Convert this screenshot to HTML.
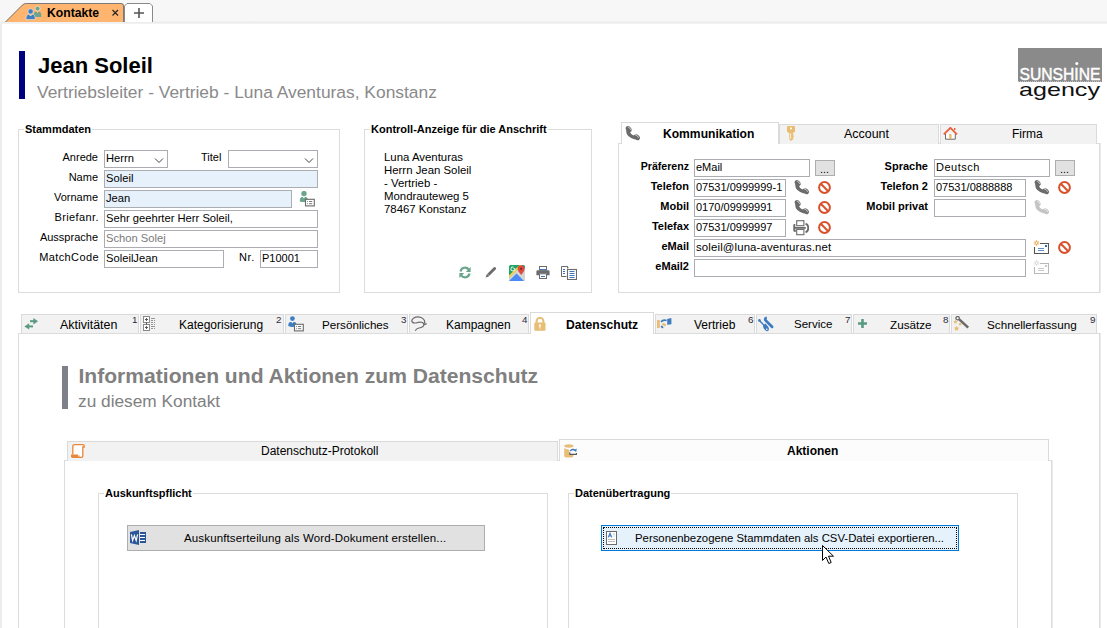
<!DOCTYPE html>
<html><head><meta charset="utf-8">
<style>
*{box-sizing:border-box;margin:0;padding:0}
html,body{width:1107px;height:628px;overflow:hidden;background:#fff;font-family:"Liberation Sans",sans-serif;color:#000}
.a{position:absolute}
.t{position:absolute;white-space:pre;line-height:1}
.b{font-weight:bold}
.fld{position:absolute;border:1px solid #abadb3;background:#fff;height:18px}
.blue{background:#e6f1fc}
.grp{position:absolute;border:1px solid #dcdcdc}
.gt{position:absolute;white-space:pre;line-height:1;font-weight:bold;font-size:11px;background:#fff;padding:0 1px}
.lbl{position:absolute;white-space:pre;line-height:1;font-size:11px;text-align:right}
.ftx{position:absolute;white-space:pre;line-height:1;font-size:11px}
.tab{position:absolute;background:#f2f2f2;border:1px solid #dadada;border-bottom:none}
.sup{position:absolute;font-size:9.8px;line-height:1;color:#2a2a3a}
</style></head>
<body>
<svg width="0" height="0" style="position:absolute">
<defs>
 <g id="phone">
  <path d="M3 4.6 Q3.2 10.8 11 12.6" fill="none" stroke="currentColor" stroke-width="3.8"/>
  <ellipse cx="3.9" cy="3.4" rx="3.6" ry="2.7" transform="rotate(50 3.9 3.4)" fill="currentColor"/>
  <ellipse cx="12.6" cy="12" rx="3.6" ry="2.7" transform="rotate(40 12.6 12)" fill="currentColor"/>
  <path d="M3 0.9 Q5.8 2.2 6.4 4.4 M10.8 9.4 Q13.4 10 14.6 12.6" fill="none" stroke="#fff" stroke-width="0.75" opacity="0.9"/>
 </g>
 <g id="forbid">
  <circle cx="6.5" cy="6.5" r="5.4" fill="none" stroke="#d9512c" stroke-width="2"/>
  <path d="M2.8 2.8 L10.2 10.2" stroke="#d9512c" stroke-width="2"/>
 </g>
 <g id="printer">
  <rect x="3.7" y="0.7" width="7.2" height="5" fill="#fff" stroke="#6b6b6b" stroke-width="1.1"/>
  <path d="M1.4 4 H2.3 V7 H12.8 V8.8 H2.3 V10.2 H3.4 V11.8 H1.4 Q0.3 11.8 0.3 10.6 V5.2 Q0.3 4 1.4 4 Z" fill="#6b6b6b"/>
  <path d="M12.6 3.6 Q15.3 4.6 15.3 7.9 Q15.3 11.2 12.6 12.4" fill="none" stroke="#6b6b6b" stroke-width="1.9"/>
  <rect x="3.7" y="9.4" width="7.2" height="5.3" fill="#fff" stroke="#6b6b6b" stroke-width="1.1"/>
 </g>
 <g id="mail">
  <path d="M7 3.5 H15.5 V13.5 H1.5 V7" fill="#fff" stroke="currentColor" stroke-width="1.1"/>
  <rect x="12" y="5" width="2" height="2" fill="var(--st,#2e6db4)"/>
  <path d="M5 8.5 H11 M5 10.5 H11" stroke="var(--st,#5b8fca)" stroke-width="1"/>
  <g stroke="var(--sun,#e8a94c)" stroke-width="0.8">
   <path d="M3.5 0 V6 M0.5 3 H6.5 M1.4 0.9 L5.6 5.1 M5.6 0.9 L1.4 5.1"/>
  </g>
  <circle cx="3.5" cy="3" r="1.3" fill="#fff" stroke="var(--sun,#e8a94c)" stroke-width="0.8"/>
 </g>
</defs></svg>
<!-- top tab strip -->
<div class="a" style="left:0;top:0;width:1107px;height:22px;background:#f7f7f7"></div>
<div class="a" style="left:0;top:21px;width:1107px;height:3px;background:linear-gradient(#f3f3f3,#ececec,#f5f5f5)"></div>
<div class="a" style="left:0;top:24px;width:2px;height:604px;background:#ececec"></div>

<!-- Kontakte tab -->
<svg class="a" style="left:0;top:0" width="160" height="24">
  <path d="M5 22 L22.5 4.5 Q23.5 3 26.5 3 L121 3 Q124 3 124 6 L124 22 Z" fill="#ffb570"/>
  <path d="M5.5 22 L22.5 5 Q24 3.5 26.5 3.5 L121 3.5 Q123.5 3.5 123.5 6 L123.5 22" fill="none" stroke="#7a7a7a" stroke-width="1"/>
  <path d="M5 22.5 L124 22.5" stroke="#f1f1f1" stroke-width="1"/>
  <path d="M124.5 22 L124.5 6 L127 3.5 L150 3.5 L152.5 6 L152.5 22" fill="#fff" stroke="#8a8a8a" stroke-width="1"/>
  <path d="M134 13 H144 M139 8 V18" stroke="#555" stroke-width="1.6"/>
  <path d="M112.5 10 L118 15.5 M118 10 L112.5 15.5" stroke="#222" stroke-width="1.1"/>
  <circle cx="37.6" cy="8.6" r="2.4" fill="#6ea58f" stroke="#fff" stroke-width="0.5"/>
  <path d="M33.6 17 Q33.4 11.6 36 11.4 L37.6 13 L39.2 11.4 Q41.4 11.6 41.4 17 Z" fill="#6ea58f"/>
  <circle cx="30.6" cy="11.4" r="2.6" fill="#3f7fc0" stroke="#fff" stroke-width="0.5"/>
  <path d="M26 19.6 Q25.8 14.4 28.8 14.2 L30.6 16 L32.4 14.2 Q35.4 14.4 35.2 19.6 Z" fill="#3f7fc0" stroke="#fff" stroke-width="0.5"/>
</svg>
<div class="t b" style="left:47px;top:7px;font-size:12.2px">Kontakte</div>

<!-- header -->
<div class="a" style="left:19px;top:51px;width:6px;height:48px;background:#000080"></div>
<div class="t b" style="left:38px;top:55px;font-size:22px">Jean Soleil</div>
<div class="t" style="left:37px;top:84px;font-size:17.4px;color:#8a8a8a">Vertriebsleiter - Vertrieb - Luna Aventuras, Konstanz</div>

<!-- logo -->
<svg class="a" style="left:1010px;top:42px" width="97" height="64" viewBox="0 0 97 64">
 <rect x="8" y="6" width="84" height="34" fill="#8a8a8a"/>
 <path d="M8 40 H92" stroke="#fff" stroke-width="1" stroke-dasharray="1 1"/>
 <text x="9.5" y="37.8" font-family="Liberation Sans" font-size="16.6" fill="#fff" stroke="#fff" stroke-width="0.45" textLength="81" lengthAdjust="spacingAndGlyphs">SUNSHINE</text>
 <circle cx="66.8" cy="21.4" r="1.5" fill="#fff"/>
 <text x="9" y="54" font-family="Liberation Sans" font-size="19" fill="#111" textLength="81" lengthAdjust="spacingAndGlyphs">agency</text>
</svg>
<!-- Stammdaten -->
<div class="grp" style="left:18px;top:129px;width:322px;height:164px"></div>
<div class="gt" style="left:24px;top:124px">Stammdaten</div>
<div class="lbl" style="right:1009px;top:152px">Anrede</div>
<div class="lbl" style="right:1009px;top:172px">Name</div>
<div class="lbl" style="right:1009px;top:192px">Vorname</div>
<div class="lbl" style="right:1008px;top:212px;letter-spacing:0.4px">Briefanr.</div>
<div class="lbl" style="right:1009px;top:232px">Aussprache</div>
<div class="lbl" style="right:1008px;top:252px;letter-spacing:0.4px">MatchCode</div>
<div class="lbl" style="left:201px;top:152px">Titel</div>
<div class="lbl" style="left:239px;top:252px;letter-spacing:0.6px">Nr.</div>
<div class="fld" style="left:104px;top:150px;width:64px"></div>
<div class="fld" style="left:228px;top:150px;width:90px"></div>
<div class="fld blue" style="left:104px;top:170px;width:214px"></div>
<div class="fld blue" style="left:104px;top:190px;width:188px"></div>
<div class="fld" style="left:104px;top:210px;width:214px"></div>
<div class="fld" style="left:104px;top:230px;width:214px"></div>
<div class="fld" style="left:104px;top:250px;width:120px"></div>
<div class="fld" style="left:260px;top:250px;width:58px"></div>
<div class="ftx" style="left:106px;top:153px;font-size:11.2px">Herrn</div>
<div class="ftx" style="left:106px;top:173px;font-size:11.2px">Soleil</div>
<div class="ftx" style="left:106px;top:193px;font-size:11.2px">Jean</div>
<div class="ftx" style="left:106px;top:213px;font-size:11.2px">Sehr geehrter Herr Soleil,</div>
<div class="ftx" style="left:106px;top:233px;font-size:11.2px;color:#7a7a7a">Schon Solej</div>
<div class="ftx" style="left:106px;top:253px;font-size:11.2px">SoleilJean</div>
<div class="ftx" style="left:262px;top:253px">P10001</div>
<svg class="a" style="left:150px;top:154px" width="170" height="12">
  <path d="M5 4.5 L9 8.5 L13 4.5" fill="none" stroke="#444" stroke-width="1"/>
  <path d="M155 4.5 L159 8.5 L163 4.5" fill="none" stroke="#444" stroke-width="1"/>
</svg>

<!-- Kontroll-Anzeige -->
<div class="grp" style="left:364px;top:129px;width:228px;height:164px"></div>
<div class="gt" style="left:370px;top:124px">Kontroll-Anzeige für die Anschrift</div>
<div class="t" style="left:384px;top:151px;font-size:11.4px;line-height:12.9px">Luna Aventuras
Herrn Jean Soleil
- Vertrieb -
Mondrauteweg 5
78467 Konstanz</div>

<!-- Vorname person icon -->
<svg class="a" style="left:299px;top:191px" width="16" height="16" viewBox="0 0 16 16">
 <circle cx="5" cy="2.6" r="2.7" fill="#6aa58c"/>
 <path d="M0.8 10.4 Q0.6 6.2 3.2 6 L3.9 6 L4.9 7.4 L5.9 6 L6.6 6 Q9.2 6.2 9 10.4 Q4.9 11.8 0.8 10.4 Z" fill="#6aa58c"/>
 <rect x="6.5" y="8.3" width="8.8" height="6.6" fill="#fff" stroke="#6b6b6b" stroke-width="1.1"/>
 <path d="M8.2 10.5 H9 M10 10.5 H13.2 M8.2 12.7 H9 M10 12.7 H13.2" stroke="#6b6b6b" stroke-width="0.9"/>
</svg>
<!-- Kontroll icons -->
<svg class="a" style="left:459px;top:266px" width="12" height="13" viewBox="0 0 12 13">
 <path d="M1.5 5.5 A4.6 4.6 0 0 1 9.8 3.6" fill="none" stroke="#6aa58c" stroke-width="2.2"/>
 <path d="M11.6 1 V6 H6.8 Z" fill="#6aa58c"/>
 <path d="M10.5 7.5 A4.6 4.6 0 0 1 2.2 9.4" fill="none" stroke="#6aa58c" stroke-width="2.2"/>
 <path d="M0.4 12 V7 H5.2 Z" fill="#6aa58c"/>
</svg>
<svg class="a" style="left:485px;top:266px" width="12" height="12" viewBox="0 0 12 12">
 <path d="M0.6 11.4 L1.6 8.4 L8.6 1.4 Q9.6 0.6 10.6 1.4 L10.8 1.6 Q11.4 2.6 10.6 3.4 L3.6 10.4 Z" fill="#6b6b6b"/>
 <path d="M2.6 8.2 L4 9.6" stroke="#fff" stroke-width="0.6"/>
</svg>
<svg class="a" style="left:509px;top:265px" width="16" height="16" viewBox="0 0 16 16">
 <rect x="0" y="0" width="16" height="16" rx="1.5" fill="#1fa463"/>
 <path d="M0 16 V12.8 L12.5 0.3 L16 3.8 V16 Z" fill="#d4d4d4"/>
 <path d="M0 10.6 L10.6 0 H13 L0 13 Z" fill="#ffd04b"/>
 <path d="M0 16 L7.5 8.5 L15 16 Z" fill="#4a8af4"/>
 <path d="M12 0.3 Q15.6 0.3 15.6 3.8 Q15.6 6 12.2 10 Q8.6 6 8.6 3.8 Q8.6 0.3 12 0.3 Z" fill="#dd4b3e"/>
 <circle cx="12.1" cy="3.8" r="1.1" fill="#7a2a22"/>
 <path d="M5.8 3.4 A2 2 0 1 1 4.6 2.1" fill="none" stroke="#fff" stroke-width="0.9"/>
 <path d="M4.3 3.6 H5.9" stroke="#fff" stroke-width="0.8"/>
</svg>
<svg class="a" style="left:536px;top:266px" width="14" height="13" viewBox="0 0 14 13">
 <rect x="3.5" y="0.5" width="7" height="3.5" fill="#fff" stroke="#6b6b6b"/>
 <rect x="3.6" y="3" width="6.8" height="1" fill="#3d78bf"/>
 <path d="M1.6 4.2 H12.4 Q13.6 4.2 13.6 5.4 V9.2 H11 V7.6 H3 V9.2 H0.4 V5.4 Q0.4 4.2 1.6 4.2 Z" fill="#6b6b6b"/>
 <rect x="3.5" y="7.8" width="7" height="4.7" fill="#fff" stroke="#6b6b6b"/>
 <path d="M5 10.5 H9" stroke="#3d78bf" stroke-width="1"/>
</svg>
<svg class="a" style="left:561px;top:266px" width="16" height="14" viewBox="0 0 16 14">
 <path d="M6.5 2.5 V0.5 H0.5 V10.5 H5.5" fill="none" stroke="#6b6b6b" stroke-width="1"/>
 <path d="M6.5 0.5 L7.5 1.5" stroke="#6b6b6b" stroke-width="1"/>
 <path d="M2 3.5 H4 M2 5.5 H4 M2 7.5 H4" stroke="#3d78bf" stroke-width="1"/>
 <rect x="6.5" y="3.5" width="9" height="10" fill="#fff" stroke="#6b6b6b" stroke-width="1.1"/>
 <path d="M8.5 5.5 H13.5 M8.5 7.5 H13.5 M8.5 9.5 H13.5 M8.5 11.5 H13.5" stroke="#3d78bf" stroke-width="1"/>
</svg>

<!-- Kommunikation -->
<div class="a" style="left:618px;top:143px;width:482px;height:150px;border:1px solid #dcdcdc;box-shadow:1px 0 0 #eaeaea"></div>
<div class="tab" style="left:779px;top:124px;width:160px;height:20px"></div>
<div class="tab" style="left:940px;top:124px;width:157px;height:20px"></div>
<div class="tab" style="left:621px;top:122px;width:158px;height:22px;background:#fff"></div>
<div class="t b" style="left:663px;top:128px;font-size:12.1px">Kommunikation</div>
<div class="t" style="left:844px;top:128px;font-size:12.45px">Account</div>
<div class="t" style="left:1012px;top:128px;font-size:12px">Firma</div>

<div class="lbl b" style="right:418px;top:161px;font-size:10.6px">Präferenz</div>
<div class="lbl b" style="right:418px;top:181px">Telefon</div>
<div class="lbl b" style="right:418px;top:201px">Mobil</div>
<div class="lbl b" style="right:418px;top:221px">Telefax</div>
<div class="lbl b" style="right:418px;top:241px">eMail</div>
<div class="lbl b" style="right:418px;top:261px">eMail2</div>
<div class="lbl b" style="right:179px;top:161px">Sprache</div>
<div class="lbl b" style="right:179px;top:181px">Telefon 2</div>
<div class="lbl b" style="right:179px;top:201px">Mobil privat</div>
<div class="fld" style="left:694px;top:159px;width:116px"></div>
<div class="fld" style="left:694px;top:179px;width:92px"></div>
<div class="fld" style="left:694px;top:199px;width:92px"></div>
<div class="fld" style="left:694px;top:219px;width:92px"></div>
<div class="fld" style="left:694px;top:239px;width:332px"></div>
<div class="fld" style="left:694px;top:259px;width:332px"></div>
<div class="fld" style="left:934px;top:159px;width:116px"></div>
<div class="fld" style="left:934px;top:179px;width:92px"></div>
<div class="fld" style="left:934px;top:199px;width:92px"></div>
<div class="a" style="left:815px;top:160px;width:20px;height:16px;border:1px solid #adadad;background:#e1e1e1"></div>
<div class="a" style="left:1055px;top:160px;width:20px;height:16px;border:1px solid #adadad;background:#e1e1e1"></div>
<div class="ftx" style="left:696px;top:162px">eMail</div>
<div class="ftx" style="left:696px;top:182px">07531/0999999-1</div>
<div class="ftx" style="left:696px;top:202px">0170/09999991</div>
<div class="ftx" style="left:696px;top:222px">07531/0999997</div>
<div class="ftx" style="left:696px;top:242px;font-size:11.4px;letter-spacing:0.14px">soleil@luna-aventuras.net</div>
<div class="ftx" style="left:936px;top:162px;letter-spacing:0.5px">Deutsch</div>
<div class="ftx" style="left:936px;top:182px">07531/0888888</div>

<!-- Kommunikation icons -->
<svg class="a" style="left:625px;top:126px;color:#6b6b6b" width="15" height="15" viewBox="0 0 16 16"><use href="#phone"/></svg>
<svg class="a" style="left:794px;top:180px;color:#6b6b6b" width="15" height="15" viewBox="0 0 16 16"><use href="#phone"/></svg>
<svg class="a" style="left:794px;top:200px;color:#6b6b6b" width="15" height="15" viewBox="0 0 16 16"><use href="#phone"/></svg>
<svg class="a" style="left:1034px;top:180px;color:#6b6b6b" width="15" height="15" viewBox="0 0 16 16"><use href="#phone"/></svg>
<svg class="a" style="left:1034px;top:200px;color:#c4c4c4" width="15" height="15" viewBox="0 0 16 16"><use href="#phone"/></svg>
<svg class="a" style="left:793px;top:220px" width="16" height="16" viewBox="0 0 16 16"><use href="#printer"/></svg>
<svg class="a" style="left:818px;top:181px" width="13" height="13"><use href="#forbid"/></svg>
<svg class="a" style="left:818px;top:201px" width="13" height="13"><use href="#forbid"/></svg>
<svg class="a" style="left:818px;top:221px" width="13" height="13"><use href="#forbid"/></svg>
<svg class="a" style="left:1058px;top:181px" width="13" height="13"><use href="#forbid"/></svg>
<svg class="a" style="left:1058px;top:241px" width="13" height="13"><use href="#forbid"/></svg>
<svg class="a" style="left:1033px;top:240px;color:#555" width="16" height="14" viewBox="0 0 16 14"><use href="#mail"/></svg>
<svg class="a" style="left:1033px;top:260px;color:#b8b8b8;--st:#c8c8c8;--sun:#d8d8d8" width="16" height="14" viewBox="0 0 16 14"><use href="#mail"/></svg>
<div class="t" style="left:820px;top:164px;font-size:11px">...</div>
<div class="t" style="left:1060px;top:164px;font-size:11px">...</div>
<!-- key -->
<svg class="a" style="left:787px;top:126px" width="9" height="16" viewBox="0 0 9 16">
 <path d="M1.2 0 H6.8 Q8 0 8 1.2 V5 Q8 6.8 6.2 6.8 H1.8 Q0 6.8 0 5 V1.2 Q0 0 1.2 0 Z" fill="#e9bb6c"/>
 <rect x="3.1" y="1.5" width="1.8" height="1.8" fill="#fff"/>
 <path d="M2.3 6 H5.9 V13.4 L4.1 15 L2.3 13.4 Z" fill="#e9bb6c"/>
 <path d="M3.7 7.4 V13" stroke="#fff" stroke-width="0.8"/>
 <path d="M5.8 8.8 H6.9 M5.8 10.4 H6.9 M5.8 12 H6.6" stroke="#e9bb6c" stroke-width="0.9"/>
</svg>
<!-- house -->
<svg class="a" style="left:943px;top:127px" width="15" height="13" viewBox="0 0 15 13">
 <path d="M2.5 6.5 V12.2 H12.3 V6.5" fill="#fff" stroke="#6b6b6b" stroke-width="1"/>
 <path d="M0.8 7.4 L7.4 0.8 L14 7.4" fill="none" stroke="#e8603c" stroke-width="1.8"/>
 <rect x="11" y="1" width="1.4" height="2" fill="#e8603c"/>
 <rect x="6.2" y="7" width="2.4" height="5" fill="#e9bb6c"/>
</svg>

<!-- main tabs -->
<div class="a" style="left:18px;top:333px;width:1082px;height:300px;border:1px solid #dcdcdc;box-shadow:1px 0 0 #eaeaea"></div>
<div class="tab" style="left:21px;top:314px;width:118px;height:19px"></div>
<div class="tab" style="left:140px;top:314px;width:144px;height:19px"></div>
<div class="tab" style="left:285px;top:314px;width:123px;height:19px"></div>
<div class="tab" style="left:409px;top:314px;width:120px;height:19px"></div>
<div class="tab" style="left:530px;top:312px;width:124px;height:22px;background:#fff"></div>
<div class="tab" style="left:655px;top:314px;width:100px;height:19px"></div>
<div class="tab" style="left:756px;top:314px;width:96px;height:19px"></div>
<div class="tab" style="left:853px;top:314px;width:97px;height:19px"></div>
<div class="tab" style="left:951px;top:314px;width:146px;height:19px"></div>
<div class="t" style="left:60px;top:319px;font-size:12.45px">Aktivitäten</div>
<div class="t" style="left:179px;top:319px;font-size:12px">Kategorisierung</div>
<div class="t" style="left:322px;top:319px;font-size:11.65px">Persönliches</div>
<div class="t" style="left:446px;top:319px;font-size:12px">Kampagnen</div>
<div class="t b" style="left:566px;top:319px;font-size:12.15px">Datenschutz</div>
<div class="t" style="left:694px;top:319px;font-size:12px">Vertrieb</div>
<div class="t" style="left:794px;top:319px;font-size:11.55px">Service</div>
<div class="t" style="left:890px;top:319px;font-size:11.7px">Zusätze</div>
<div class="t" style="left:987px;top:319px;font-size:11.7px">Schnellerfassung</div>

<!-- Datenschutz heading -->
<div class="a" style="left:62px;top:366px;width:6px;height:43px;background:#7d8088"></div>
<div class="t b" style="left:78.4px;top:365px;font-size:21.1px;color:#808080">Informationen und Aktionen zum Datenschutz</div>
<div class="t" style="left:78px;top:393px;font-size:17.3px;color:#808080">zu diesem Kontakt</div>

<!-- sub tabs -->
<div class="a" style="left:64px;top:460px;width:988px;height:200px;border:1px solid #dcdcdc;box-shadow:1px 0 0 #eaeaea"></div>
<div class="tab" style="left:67px;top:441px;width:491px;height:20px"></div>
<div class="tab" style="left:559px;top:439px;width:490px;height:22px;background:#fcfcfc"></div>
<div class="t" style="left:261px;top:445px;font-size:12px">Datenschutz-Protokoll</div>
<div class="t b" style="left:787px;top:445px;font-size:12px">Aktionen</div>

<div class="grp" style="left:98px;top:493px;width:450px;height:200px"></div>
<div class="gt" style="left:104px;top:488px">Auskunftspflicht</div>
<div class="grp" style="left:568px;top:493px;width:450px;height:200px"></div>
<div class="gt" style="left:574px;top:488px">Datenübertragung</div>

<div class="a" style="left:127px;top:525px;width:358px;height:26px;border:1px solid #adadad;background:#e1e1e1"></div>
<div class="t" style="left:184px;top:533px;font-size:11.5px;letter-spacing:0.14px">Auskunftserteilung als Word-Dokument erstellen...</div>
<div class="a" style="left:601px;top:525px;width:358px;height:26px;border:1px solid #0078d7;background:#e5f1fb"></div>
<div class="a" style="left:603px;top:527px;width:354px;height:22px;border:1px dotted #000"></div>
<div class="t" style="left:635px;top:533px;font-size:11.35px">Personenbezogene Stammdaten als CSV-Datei exportieren...</div>

<!-- main tab icons -->
<svg class="a" style="left:24px;top:318px" width="15" height="12" viewBox="0 0 15 12">
 <path d="M6 3.2 H11" stroke="#5a9a80" stroke-width="2"/>
 <path d="M9.4 0 L14 3.2 L9.4 6.4 Z" fill="#5a9a80"/>
 <path d="M9 8.4 H4" stroke="#5a9a80" stroke-width="2"/>
 <path d="M5.2 5.2 L0.4 8.4 L5.2 11.6 Z" fill="#5a9a80"/>
</svg>
<svg class="a" style="left:143px;top:316px" width="15" height="16" viewBox="0 0 15 16">
 <rect x="0.5" y="0.5" width="6" height="6" fill="#fff" stroke="#8a8a8a"/>
 <rect x="0.5" y="8.5" width="6" height="6" fill="#fff" stroke="#8a8a8a"/>
 <path d="M3.5 2 V5 M2 3.5 H5 M3.5 10 V13 M2 11.5 H5 M3.5 6.5 V8.5" stroke="#555" stroke-width="1"/>
 <path d="M8 2.5 H12 M8 4.5 H10 M11 4.5 H12 M8 6.5 H10 M11 6.5 H12 M8 8.5 H10 M11 8.5 H12 M8 10.5 H12 M8 12.5 H10 M11 12.5 H12" stroke="#8a8a8a" stroke-width="0.9"/>
</svg>
<svg class="a" style="left:288px;top:316px" width="16" height="16" viewBox="0 0 16 16">
 <circle cx="4.4" cy="2.6" r="2.4" fill="#3f7fc0"/>
 <path d="M0.3 10 Q0.2 6.3 2.6 6.1 L3.4 6.1 L4.4 7.6 L5.4 6.1 L6.2 6.1 Q8.6 6.3 8.6 10 Q4.4 11.8 0.3 10 Z" fill="#3f7fc0"/>
 <rect x="6.5" y="8.3" width="8.8" height="6.6" fill="#fff" stroke="#6b6b6b" stroke-width="1.1"/>
 <path d="M8.2 10.5 H9 M10 10.5 H13.2 M8.2 12.7 H9 M10 12.7 H13.2" stroke="#6b6b6b" stroke-width="0.9"/>
</svg>
<svg class="a" style="left:411px;top:316px" width="17" height="16" viewBox="0 0 17 16">
 <path d="M13.5 7.5 Q14.5 3.5 10 1.5 Q6 0 2.5 2.2 Q0 4 1.2 6 Q2.5 7.5 5.5 6.8 Q9 5.5 11.5 6.5 Q14 8 12 10.5 Q10.5 11.8 8 12 Q5.5 12.5 4.2 14.8" fill="none" stroke="#6b6b6b" stroke-width="1.2"/>
 <path d="M12.6 8.6 L15.6 7.8" stroke="#6b6b6b" stroke-width="1.4"/>
</svg>
<svg class="a" style="left:534px;top:317px" width="12" height="14" viewBox="0 0 12 14">
 <path d="M2.6 6 V4.2 A3.4 3.4 0 0 1 9.4 4.2 V6" fill="none" stroke="#e8bd76" stroke-width="2"/>
 <rect x="0.3" y="5.4" width="11.2" height="8.4" rx="1" fill="#e8bd76"/>
 <circle cx="5.9" cy="8.2" r="1" fill="#fff"/>
 <path d="M5.9 8.4 V11.6" stroke="#fff" stroke-width="1"/>
</svg>
<svg class="a" style="left:657px;top:318px" width="15" height="11" viewBox="0 0 15 11">
 <rect x="0" y="2" width="2.8" height="8" fill="#e8bd76"/>
 <path d="M10.2 1 L14.4 0 V6.2 L10.2 6.8 Z" fill="#3e7bbf"/>
 <path d="M4 4 Q6 1.2 9.6 2.6" fill="none" stroke="#3e7bbf" stroke-width="1.6"/>
 <path d="M4.6 6.2 L6.6 4.8 L9.4 6.8 L7.8 8.4 Z" fill="#e8bd76"/>
 <path d="M4.2 8 L6 9.8" stroke="#3e7bbf" stroke-width="1.8"/>
</svg>
<svg class="a" style="left:758px;top:316px" width="16" height="16" viewBox="0 0 16 16">
 <path d="M8.6 0.4 Q6 0.6 5.8 3.2 Q5.8 4.4 6.6 5.2 L13 11.8 Q14.2 12.8 15.2 11.8 Q16 10.8 15 9.8 L8.6 3.6 Q9.4 2.2 8.6 0.4 Z" fill="#3e7bbf"/>
 <path d="M6.4 0.2 L8 2.2 L7.4 3 L5.4 1.4 Z" fill="#fff" opacity="0"/>
 <path d="M1.4 4.6 L6.8 10" stroke="#3e7bbf" stroke-width="1.4"/>
 <circle cx="1.4" cy="4.4" r="1.3" fill="#3e7bbf"/>
 <path d="M5.2 9.6 L7.4 7.6 L10.4 11 Q11.4 12.6 10.6 14.6 Q9.2 15.8 7.8 14.8 L5.8 12.4 Q4.8 11 5.2 9.6 Z" fill="#3e7bbf"/>
 <circle cx="8.8" cy="13.2" r="0.8" fill="#fff"/>
</svg>
<svg class="a" style="left:858px;top:319px" width="9" height="9" viewBox="0 0 9 9">
 <path d="M3.2 0 H5.8 V3.2 H9 V5.8 H5.8 V9 H3.2 V5.8 H0 V3.2 H3.2 Z" fill="#5a9a80"/>
</svg>
<svg class="a" style="left:953px;top:316px" width="17" height="16" viewBox="0 0 17 16">
 <path d="M5.4 2.6 L15.2 11.6" stroke="#6b6b6b" stroke-width="2.6"/>
 <circle cx="4.6" cy="2.2" r="1.7" fill="#fff" stroke="#6b6b6b" stroke-width="1.3"/>
 <g transform="translate(-1.6 0)">
 <path d="M4.1 3.6 L4.8 5 L6.3 5.2 L5.2 6.2 L5.5 7.7 L4.1 7 L2.7 7.7 L3 6.2 L1.9 5.2 L3.4 5 Z" fill="#e8bd76"/>
 <path d="M5.2 9.6 L6.1 11.4 L8 11.6 L6.6 12.9 L7 14.8 L5.2 13.9 L3.4 14.8 L3.8 12.9 L2.4 11.6 L4.3 11.4 Z" fill="#e8bd76"/>
 <circle cx="8.7" cy="8.3" r="1.3" fill="#e8bd76"/>
 </g>
</svg>
<div class="sup" style="left:132px;top:315.3px">1</div>
<div class="sup" style="left:276px;top:315.3px">2</div>
<div class="sup" style="left:401px;top:315.3px">3</div>
<div class="sup" style="left:522px;top:315.3px">4</div>
<div class="sup" style="left:748px;top:315.3px">6</div>
<div class="sup" style="left:845px;top:315.3px">7</div>
<div class="sup" style="left:943px;top:315.3px">8</div>
<div class="sup" style="left:1090px;top:315.3px">9</div>

<!-- sub tab icons -->
<svg class="a" style="left:71px;top:444px" width="14" height="14" viewBox="0 0 14 14">
 <path d="M1.8 10.5 V2.4 Q1.8 0.7 3.5 0.7 H12.2 Q13.2 0.7 13.2 2 V3 H11.8 V12 Q11.8 13.3 10.5 13.3 H2.4 Q0.7 13.3 0.7 11.4" fill="#fff" stroke="#e8863a" stroke-width="1.3"/>
 <path d="M0 10.6 H7.2 V13.6 H1 Q0 13.6 0 12.6 Z" fill="#e8863a"/>
 <path d="M7.2 13.3 Q8.4 13 8.4 11.6" fill="none" stroke="#e8863a" stroke-width="1"/>
</svg>
<svg class="a" style="left:564px;top:444px" width="13" height="14" viewBox="0 0 13 14">
 <ellipse cx="4.8" cy="2" rx="4.6" ry="1.7" fill="#e8bd76"/>
 <path d="M0.2 4 Q2 5.4 4.8 5.4 Q7.6 5.4 9.4 4 V12 Q9.4 13.6 4.8 13.6 Q0.2 13.6 0.2 12 Z" fill="#e8bd76"/>
 <rect x="5.2" y="4.6" width="7.8" height="6.2" fill="#fff"/>
 <path d="M6.2 7.2 Q7.6 4.8 10.8 5.8" fill="none" stroke="#3e7bbf" stroke-width="1.4"/>
 <path d="M12.8 4.6 L12.2 8 L9.4 6.2 Z" fill="#3e7bbf"/>
 <path d="M5.8 8.2 V10.4 H12.4 V9" fill="none" stroke="#555" stroke-width="1.1"/>
</svg>

<!-- button icons -->
<svg class="a" style="left:130px;top:530px" width="16" height="15" viewBox="0 0 16 15">
 <path d="M0 2 L9 0 V15 L0 13 Z" fill="#2b579a"/>
 <path d="M1.4 4.4 L2.6 10.6 L4.4 5.6 L6.2 10.6 L7.6 4.4" fill="none" stroke="#fff" stroke-width="1.2"/>
 <rect x="10" y="2" width="6" height="11" fill="#2b579a"/>
 <path d="M10 4.5 H15 M10 7.5 H15 M10 10.5 H15" stroke="#fff" stroke-width="1"/>
</svg>
<svg class="a" style="left:606px;top:531px" width="11" height="14" viewBox="0 0 11 14">
 <rect x="0.5" y="0.5" width="10" height="13" fill="#fff" stroke="#6b6b6b" stroke-width="1"/>
 <path d="M2.2 6.4 L4 2.2 L5.8 6.4 M2.8 5 H5.2" fill="none" stroke="#3e7bbf" stroke-width="1.1"/>
 <path d="M7 3 H8.6 M7.6 5 H8.6" stroke="#9ab" stroke-width="0.8"/>
 <path d="M2 8.5 H9 M2 10.5 H9" stroke="#aaa" stroke-width="0.8"/>
</svg>

<!-- cursor -->
<svg class="a" style="left:821px;top:544px" width="14" height="21" viewBox="0 0 14 21">
 <path d="M1.5 1.5 V16.5 L5 13 L7.8 19.5 L10.2 18.5 L7.5 12.2 H12.5 Z" fill="#fff" stroke="#000" stroke-width="1" stroke-linejoin="miter"/>
</svg>

</body></html>
